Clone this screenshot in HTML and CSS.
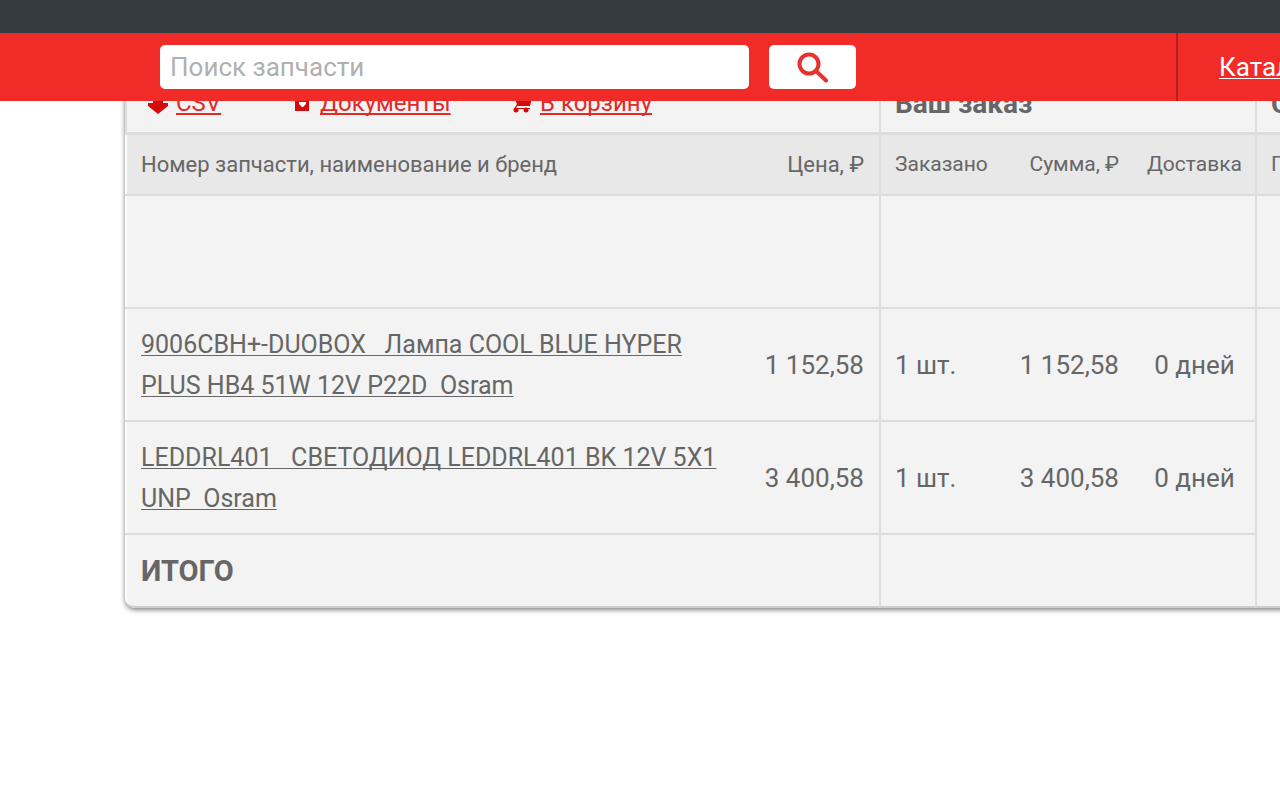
FILE: index.html
```html
<!DOCTYPE html>
<html lang="ru">
<head>
<meta charset="utf-8">
<meta name="viewport" content="width=device-width, initial-scale=1">
<title>Заказ</title>
<link rel="stylesheet" href="styles.css">
</head>
<body>
<div class="top">
  <div class="status-bar"></div>
  <header class="header">
    <form class="search" role="search">
      <input class="search-input" type="search" placeholder="Поиск запчасти" aria-label="Поиск запчасти">
      <button class="search-button" type="button" aria-label="Найти">
        <svg class="search-icon" viewBox="0 0 32 32" aria-hidden="true"><circle cx="12" cy="13" r="9.500"/><path d="M19 20l10 9.500"/></svg>
      </button>
    </form>
    <nav class="nav"><a href="#">Каталог</a></nav>
  </header>
</div>
<main class="content">
  <table class="order">
    <colgroup>
      <col class="col-name"><col class="col-price"><col class="col-count"><col class="col-sum"><col class="col-delivery"><col class="col-state">
    </colgroup>
    <thead>
      <tr class="row-tools">
        <td colspan="2">
          <div class="tools">
            <a class="tool tool-csv" href="#"><svg class="tool-icon" viewBox="0 0 24 24" aria-hidden="true"><path d="M7 3h10v9h5v3L12 23 2 15v-3h5z"/></svg><span>CSV</span></a>
            <a class="tool tool-docs" href="#"><svg class="tool-icon" viewBox="0 0 24 24" aria-hidden="true"><path d="M5 2h14v18H5z"/><path class="mark" d="M9 11h7v2l-3 3h-1l-3-3z"/></svg><span>Документы</span></a>
            <a class="tool" href="#"><svg class="tool-icon" viewBox="0 0 24 24" aria-hidden="true"><path d="M3 4h4l1 3h14l-2 8H7l-1 2h14v1H4l3-5z"/><circle cx="6" cy="19" r="2.500"/><circle cx="16" cy="19" r="2.500"/></svg><span>В корзину</span></a>
          </div>
        </td>
        <th class="group" colspan="3">Ваш заказ</th>
        <th class="group">Состояние</th>
      </tr>
      <tr class="row-head">
        <th>Номер запчасти, наименование и бренд</th>
        <th class="num">Цена, ₽</th>
        <th class="group small">Заказано</th>
        <th class="num small">Сумма, ₽</th>
        <th class="mid small">Доставка</th>
        <th class="group small">Позиция</th>
      </tr>
    </thead>
    <tbody>
      <tr class="row-empty"><td colspan="2"></td><td class="group" colspan="3"></td><td class="group"></td></tr>
      <tr>
        <td><a class="part" href="#">9006CBH+-DUOBOX&nbsp;&nbsp; Лампа COOL BLUE HYPER PLUS HB4 51W 12V P22D&nbsp; Osram</a></td>
        <td class="num">1 152,58</td>
        <td class="group">1 шт.</td>
        <td class="num">1 152,58</td>
        <td class="mid">0 дней</td>
        <td class="group last" rowspan="3"></td>
      </tr>
      <tr>
        <td><a class="part" href="#">LEDDRL401&nbsp;&nbsp; СВЕТОДИОД LEDDRL401 BK 12V 5X1 UNP&nbsp; Osram</a></td>
        <td class="num">3 400,58</td>
        <td class="group">1 шт.</td>
        <td class="num">3 400,58</td>
        <td class="mid">0 дней</td>
      </tr>
      <tr class="row-total"><th colspan="2">ИТОГО</th><td class="group" colspan="3"></td></tr>
    </tbody>
  </table>
</main>
</body>
</html>
```
FILE: styles.css
```css
* { box-sizing: border-box; }
body {
  margin: 0;
  min-height: 100vh;
  background: #fff;
  color: #666;
  font: 26px/41px Roboto, "Noto Sans", sans-serif;
  overflow-x: hidden;
}
.top { position: relative; z-index: 1; }
.status-bar { height: 33px; background: #363b3f; }
.header {
  display: flex;
  justify-content: space-between;
  height: 68px;
  padding-left: 160px;
  background: #f12c28;
}
.search { display: flex; flex: 0 1 696px; gap: 20px; padding: 12px 0; }
.search-input {
  flex: 1;
  min-width: 0;
  padding: 0 10px;
  border: 0;
  border-radius: 5px;
  background: #fff;
  font: 26px/44px Roboto, sans-serif;
}
.search-input::placeholder { color: #b0b0b0; }
.search-button {
  display: flex;
  align-items: center;
  justify-content: center;
  width: 87px;
  padding: 0;
  border: 0;
  border-radius: 5px;
  background: #fff;
}
.search-icon { width: 32px; height: 32px; fill: none; stroke: #e73330; stroke-width: 4; stroke-linecap: round; }
.nav {
  width: 104px;
  padding-left: 41px;
  border-left: 2px solid #b51d1d;
  overflow: hidden;
  line-height: 68px;
}
a { color: inherit; text-decoration-thickness: 1px; text-underline-offset: 2px; text-decoration-skip-ink: none; }
.nav a { color: #fff; }
.content {
  margin-top: -27px;
  padding: 0 0 40px 125px;
  overflow: hidden;
}
.order {
  width: calc(100% + 200px);
  table-layout: fixed;
  border-spacing: 0;
  border-radius: 10px;
  background: #f3f3f3;
  box-shadow: inset 2px 0 #fff, 0 2px 5px rgba(0, 0, 0, 0.5);
}
.col-price { width: 127px; }
.col-count { width: 125px; }
.col-sum { width: 130px; }
.col-delivery { width: 121px; }
.col-state { width: 225px; }
.order th, .order td {
  padding: 15px 15px 14px;
  border-bottom: 2px solid #ddd;
  text-align: left;
  font-weight: 400;
  white-space: nowrap;
}
.order th:first-child, .order td:first-child { padding-left: 16px; }
.order .group, .order .group:first-child { padding-left: 14px; border-left: 2px solid #ddd; }
.order .num { padding-left: 0; text-align: right; }
.order .mid { padding-left: 0; padding-right: 0; text-align: center; }
.order .row-tools td, .order .row-tools th { height: 61px; padding-top: 0; padding-bottom: 0; border-bottom-width: 3px; }
.order .row-tools td { border-left: 2px solid #ddd; }
.order .row-tools th { font-size: 28px; font-weight: 700; }
.order .row-head th {
  height: 61px;
  padding-top: 0;
  padding-bottom: 0;
  background: #e8e8e8;
  font-size: 22px;
}
.order .row-head .small { font-size: 21px; }
.order .row-head th:first-child { background: linear-gradient(to right, #fff 2px, #e8e8e8 2px); }
.order .row-empty td { height: 113px; }
.order .part { font-size: 25px; white-space: normal; }
.order .row-total th, .order .row-total td, .order .last { height: 73px; border-bottom-color: #ccc; }
.order .row-total th { font-size: 29px; font-weight: 700; border-bottom-left-radius: 10px; }
.tools { display: flex; color: #e02b29; font-size: 24px; }
.tool { display: flex; align-items: center; gap: 6px; text-decoration: none; }
.tool span { text-decoration: underline 2px; text-underline-offset: 2px; }
.tool-icon { width: 24px; height: 24px; fill: #d60a0a; }
.tool-icon .mark { fill: #fff; }
.tool-csv { width: 147px; padding-left: 3px; }
.tool-docs { width: 220px; }
```
